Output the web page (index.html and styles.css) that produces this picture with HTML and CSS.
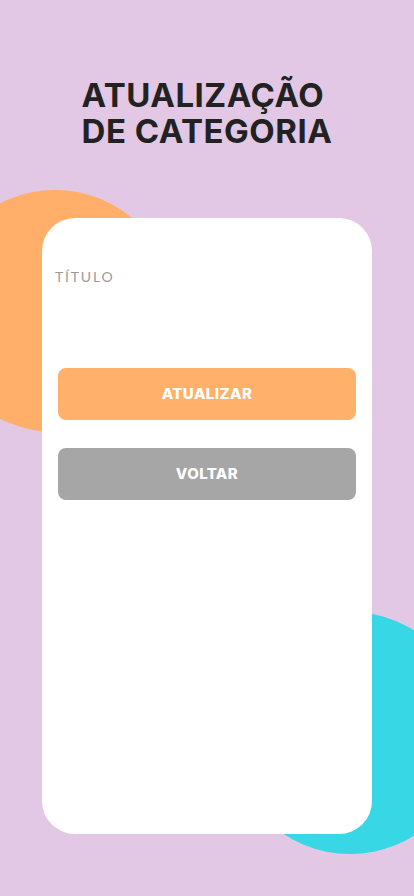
FILE: index.html
```html
<!DOCTYPE html>
<html lang="pt-BR">
<head>
<meta charset="utf-8">
<title>Atualização de Categoria</title>
<link rel="stylesheet" href="styles.css">
</head>
<body>
<div class="screen">
  <div class="blob blob-orange"></div>
  <div class="blob blob-cyan"></div>
  <h1 class="title">ATUALIZAÇÃO&nbsp;<br>DE CATEGORIA</h1>
  <main class="card">
    <label class="field-label" for="titulo">TÍTULO</label>
    <input class="field-input" id="titulo" type="text">
    <button class="btn btn-primary" type="button">ATUALIZAR</button>
    <button class="btn btn-secondary" type="button">VOLTAR</button>
  </main>
</div>
</body>
</html>
```
FILE: styles.css
```css
* { box-sizing: border-box; }
html, body { margin: 0; padding: 0; }
body {
  background: #e2c8e4;
  font-family: "Inter", "Noto Sans", sans-serif;
}
.screen {
  position: relative;
  width: 414px;
  height: 896px;
  overflow: hidden;
  background: #e2c8e4;
  display: flex;
  flex-direction: column;
  align-items: center;
  padding-top: 77px;
}
.blob {
  position: absolute;
  border-radius: 50%;
  width: 242px;
  height: 242px;
  z-index: 0;
}
.blob-orange {
  background: #ffaf69;
  left: -66px;
  top: 190px;
}
.blob-cyan {
  background: #38d7e6;
  left: 229px;
  top: 612px;
}
.title {
  position: relative;
  z-index: 1;
  margin: 0;
  font-family: "Inter", "DejaVu Sans", sans-serif;
  font-weight: 700;
  font-size: 33px;
  line-height: 36px;
  letter-spacing: 0.5px;
  color: #222222;
  text-align: center;
}
.card {
  position: relative;
  z-index: 1;
  margin-top: 69px;
  width: 330px;
  height: 616px;
  background: #ffffff;
  border-radius: 33px;
  padding: 50px 16px 0 16px;
  display: flex;
  flex-direction: column;
  align-self: flex-start;
  margin-left: 42px;
}
.field-label {
  margin-left: -3px;
  font-family: "Lato", "Open Sans", sans-serif;
  font-weight: 400;
  font-size: 14px;
  letter-spacing: 1.8px;
  color: #9a9a9a;
  line-height: 18px;
}
.field-input {
  height: 64px;
  border: 0;
  outline: none;
  background: transparent;
  margin-bottom: 18px;
}
.btn {
  height: 52px;
  border: 0;
  border-radius: 8px;
  color: #ffffff;
  font-family: "Inter", "Noto Sans", sans-serif;
  font-weight: 800;
  font-size: 15px;
  letter-spacing: 0.4px;
  padding-top: 0;
}
.btn-primary { background: #ffb06a; }
.btn-secondary { background: #a6a6a6; margin-top: 28px; }
```
